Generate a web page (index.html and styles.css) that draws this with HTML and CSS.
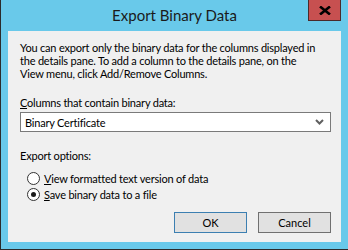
FILE: index.html
```html
<!DOCTYPE html>
<html>
<head>
<meta charset="utf-8">
<link rel="stylesheet" href="styles.css">
</head>
<body>
<div class="window">
  <div class="titlebar">
    <span class="spacer"></span>
    <span class="title">Export Binary Data</span>
    <span class="controls">
      <button class="close" type="button" aria-label="Close">
        <svg width="12" height="9" viewBox="0 0 12 9"><path d="M1 0.5 L11 8.5 M11 0.5 L1 8.5" stroke="#000" stroke-width="2.6" fill="none"/></svg>
      </button>
    </span>
  </div>
  <div class="client">
    <p class="intro">You can export only the binary data for the columns displayed in<br>the details pane. To add a column to the details pane, on the<br>View menu, click Add/Remove Columns.</p>
    <label class="label field-label"><u>C</u>olumns that contain binary data:</label>
    <div class="combo">
      <span class="combo-text">Binary Certificate</span>
      <svg class="chevron" width="9" height="6" viewBox="0 0 9 6"><path d="M1 1 L4.5 4.5 L8 1" stroke="#606060" stroke-width="2" fill="none"/></svg>
    </div>
    <div class="label options-label">Export options:</div>
    <div class="radio-list">
      <div class="radio-row"><span class="radio"></span><span><u>V</u>iew formatted text version of data</span></div>
      <div class="radio-row"><span class="radio checked"></span><span><u>S</u>ave binary data to a file</span></div>
    </div>
    <div class="buttons">
      <button class="btn default" type="button">OK</button>
      <button class="btn" type="button">Cancel</button>
    </div>
  </div>
</div>
</body>
</html>
```
FILE: styles.css
```css
html, body {
  margin: 0;
  padding: 0;
  background: #69c9ea;
}
.window {
  width: 348px;
  height: 250px;
  box-sizing: border-box;
  background: #69c9ea;
  border-left: 1px solid #2b2b2b;
  border-bottom: 1px solid #2b2b2b;
  display: flex;
  flex-direction: column;
  font-family: Lato, "Liberation Sans", sans-serif;
  font-size: 11px;
  color: #000;
}
.titlebar {
  height: 31px;
  flex: none;
  display: grid;
  grid-template-columns: 1fr auto 1fr;
  align-items: start;
}
.title {
  font-size: 15px;
  line-height: 20px;
  margin-top: 5px;
  color: #1a1a1a;
  white-space: nowrap;
}
.controls {
  display: flex;
  justify-content: flex-end;
  padding-right: 7px;
}
.close {
  width: 33px;
  height: 21px;
  box-sizing: border-box;
  margin: 0;
  padding: 0;
  background: #c75050;
  border: 1px solid #4a2a2a;
  border-top: none;
  display: flex;
  align-items: center;
  justify-content: center;
}
.client {
  flex: 1;
  margin: 0 7px 7px 7px;
  background: #f0f0f0;
  padding: 10px 10px 0 12px;
  display: flex;
  flex-direction: column;
  letter-spacing: -0.2px;
}
.intro {
  margin: 0;
  line-height: 13px;
  white-space: nowrap;
}
.label {
  display: block;
  line-height: 13px;
}
.field-label {
  margin-top: 16px;
}
.combo {
  margin-top: 3px;
  height: 20px;
  box-sizing: border-box;
  border: 1px solid #7a7a7a;
  background: #fff;
  display: flex;
  align-items: center;
  padding: 0 6px 0 4px;
}
.combo-text {
  flex: 1;
}
.options-label {
  margin-top: 17px;
}
.radio-list {
  margin-top: 8px;
  padding-left: 7px;
  display: flex;
  flex-direction: column;
}
.radio-row {
  height: 16px;
  display: flex;
  align-items: center;
  gap: 4px;
}
.radio {
  width: 13px;
  height: 13px;
  box-sizing: border-box;
  border: 1px solid #333;
  border-radius: 50%;
  background: #fff;
  display: flex;
  align-items: center;
  justify-content: center;
}
.radio.checked::after {
  content: "";
  width: 5px;
  height: 5px;
  border-radius: 50%;
  background: #1a1a1a;
}
.buttons {
  margin-top: auto;
  margin-bottom: 9px;
  display: flex;
  justify-content: flex-end;
  gap: 11px;
}
.btn {
  width: 73px;
  height: 21px;
  box-sizing: border-box;
  margin: 0;
  padding: 0;
  background: #e1e1e1;
  border: 1px solid #707070;
  font-family: Lato, "Liberation Sans", sans-serif;
  font-size: 11px;
  color: #000;
}
.btn.default {
  border-color: #3c7fb1;
}
```
